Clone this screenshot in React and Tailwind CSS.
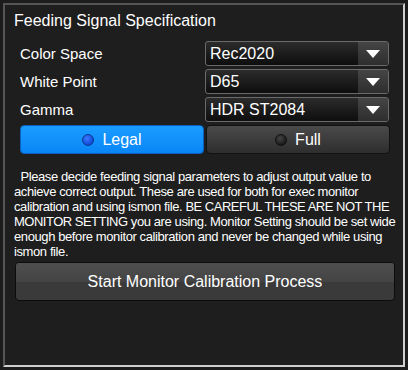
import { useState } from "react";

const font = { fontFamily: '"Liberation Sans", Arial, sans-serif' };

const Select = ({ value }) => (
  <div className="flex h-[25px] items-stretch rounded-[3px] border border-[#6a6a6a] bg-gradient-to-b from-[#2c2c2c] to-[#0e0e0e] overflow-hidden">
    <div className="flex-1 pl-[4px] text-[16px] leading-[23px] text-white">{value}</div>
    <div className="flex w-[30px] items-center justify-center bg-gradient-to-b from-[#454545] to-[#2e2e2e]">
      <div className="h-0 w-0 border-l-[7px] border-r-[7px] border-t-[8px] border-l-transparent border-r-transparent border-t-white" />
    </div>
  </div>
);

const Radio = ({ label, active, onClick }) => (
  <button
    onClick={onClick}
    className={
      "flex h-[29px] items-center justify-center gap-[8px] rounded-[4px] border text-[16px] text-white " +
      (active
        ? "border-[#0a5fbf] bg-gradient-to-b from-[#1a9cff] to-[#0a86f7]"
        : "border-[#111] bg-gradient-to-b from-[#4a4a4a] via-[#3c3c3c] to-[#2e2e2e]")
    }>
    <span
      className={
        "h-[12px] w-[12px] rounded-full border " +
        (active
          ? "border-[#0a3c8c] bg-[radial-gradient(circle_at_40%_35%,#3a7bff,#0033c8)]"
          : "border-[#111] bg-[radial-gradient(circle_at_40%_35%,#444,#0a0a0a)]")
      }
    />
    {label}
  </button>
);

export default function App() {
  const [range, setRange] = useState("legal");
  return (
    <div className="h-[370px] w-[408px] bg-[#1c1c1c] p-[3px]" style={font}>
      <div className="h-[364px] w-[402px] border-2 border-t-[#555] border-l-[#555] border-r-[#cfcfcf] border-b-[#cfcfcf] bg-[#1e1e1e] pt-[6px]">
        <div className="pl-[9px] text-[16px] leading-[20px] text-white">Feeding Signal Specification</div>
        <div className="mt-[10px] grid grid-cols-[185px_184px] gap-x-[0px] gap-y-[3px] pl-[15px]">
          <div className="text-[15px] leading-[25px] text-white">Color Space</div>
          <Select value="Rec2020" />
          <div className="text-[15px] leading-[25px] text-white">White Point</div>
          <Select value="D65" />
          <div className="text-[15px] leading-[25px] text-white">Gamma</div>
          <Select value="HDR ST2084" />
        </div>
        <div className="mt-[3px] grid grid-cols-[184px_184px] gap-[2px] pl-[15px]">
          <Radio label="Legal" active={range === "legal"} onClick={() => setRange("legal")} />
          <Radio label="Full" active={range === "full"} onClick={() => setRange("full")} />
        </div>
        <p className="mt-[15px] whitespace-nowrap pl-[9px] text-[13px] leading-[15px] tracking-[-0.4px] text-white">
          &nbsp; Please decide feeding signal parameters to adjust output value to
          <br />
          achieve correct output. These are used for both for exec monitor
          <br />
          calibration and using ismon file. <span className="tracking-[-0.5px]">BE CAREFUL THESE ARE NOT THE</span>
          <br />
          <span className="tracking-[-0.5px]">MONITOR SETTING</span> you are using. Monitor Setting should be set wide
          <br />
          enough before monitor calibration and never be changed while using
          <br />
          ismon file.
        </p>
        <div className="mt-[3px] pl-[10px] pr-[8px]">
          <button className="relative h-[39px] w-full overflow-hidden rounded-[4px] border border-[#0c0c0c] bg-[#3a3a3a] text-[16px] text-white">
            <span className="absolute inset-x-0 top-0 h-1/2 bg-gradient-to-b from-[#4e4e4e] to-[#444]" />
            <span className="relative">Start Monitor Calibration Process</span>
          </button>
        </div>
      </div>
    </div>
  );
}
